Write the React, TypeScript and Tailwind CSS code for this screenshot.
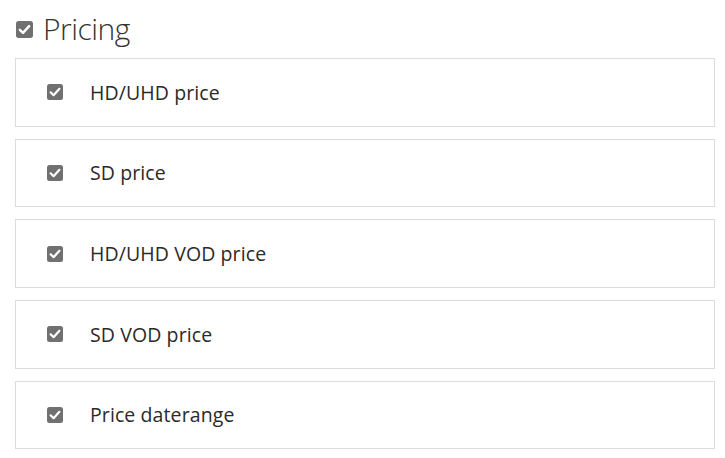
import React from "react";

function Check({ size }: { size: number }) {
  return (
    <svg width={size} height={size} viewBox="0 0 16 16" className="shrink-0">
      <rect x="0" y="0" width="16" height="16" rx="2.5" fill="#707070" />
      <path d="M3.6 8.3 L6.6 11.2 L12.4 4.8" fill="none" stroke="#ffffff" strokeWidth="2.2" strokeLinecap="round" strokeLinejoin="round" />
    </svg>
  );
}

const items = ["HD/UHD price", "SD price", "HD/UHD VOD price", "SD VOD price", "Price daterange"];

export default function App() {
  return (
    <div className="w-[725px] h-[458px] bg-white overflow-hidden" style={{ fontFamily: '"Open Sans", "Noto Sans", sans-serif' }}>
      <div className="flex items-center gap-[10px] pl-[16px] pt-[9px] h-[49px]">
        <Check size={17} />
        <span className="text-[30px] font-light text-[#333] leading-none tracking-[-0.5px]">Pricing</span>
      </div>
      <div className="flex flex-col gap-[12px] pl-[15px] w-[715px] pt-[9px]">
        {items.map((t) => (
          <div key={t} className="h-[68.7px] border border-[#dcdcdc] flex items-center pl-[31px]">
            <Check size={16} />
            <span className="ml-[27px] text-[19.5px] text-[#2a2a2a] leading-none tracking-[0.1px]">{t}</span>
          </div>
        ))}
      </div>
    </div>
  );
}
